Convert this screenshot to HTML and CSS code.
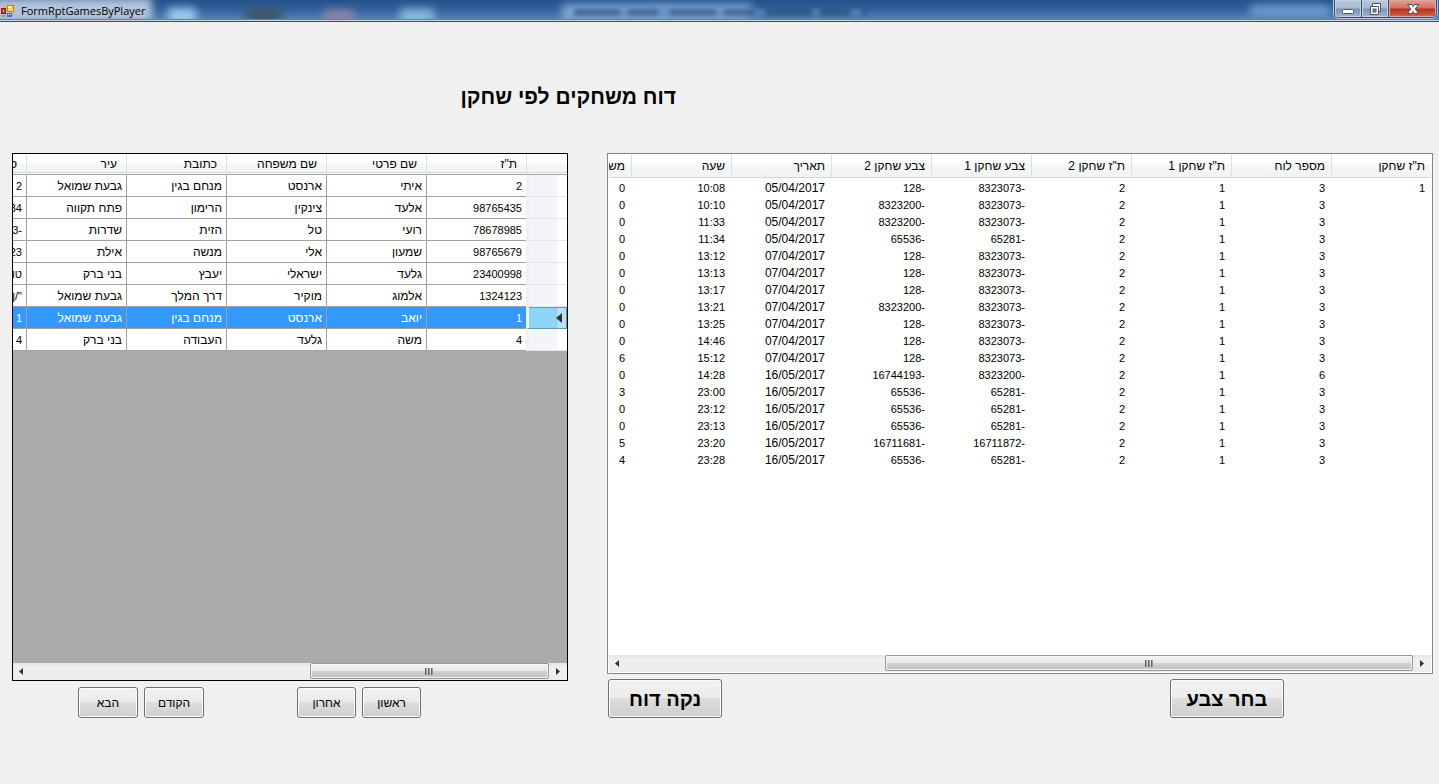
FILE: index.html
```html
<!DOCTYPE html>
<html lang="he">
<head>
<meta charset="utf-8">
<title>FormRptGamesByPlayer</title>
<link rel="stylesheet" href="styles.css">
</head>
<body>
<header class="titlebar">
  <svg class="app-icon" width="14" height="14" viewBox="0 0 14 14" aria-hidden="true">
    <rect width="14" height="14" fill="#b9bcc4"/>
    <rect x="0.5" y="4.500" width="4" height="5" fill="#c8352b" stroke="#8c1e17"/>
    <rect x="2" y="6" width="1" height="2" fill="#f3a49c"/>
    <rect x="6.500" y="1.500" width="6" height="6" fill="#ffd64a" stroke="#b8860b"/>
    <rect x="7" y="2" width="3" height="2" fill="#fff0a8"/>
    <rect x="6" y="9" width="5" height="4" fill="#3f6fd0"/>
    <rect x="7" y="10" width="3" height="1" fill="#a8c4f5"/>
    <rect x="1" y="11" width="3" height="2" fill="#8d9099"/>
  </svg>
  <span class="titlebar-text">FormRptGamesByPlayer</span>
  <div class="glass" aria-hidden="true">
    <i class="blot blot-a"></i><i class="blot blot-b"></i><i class="blot blot-c"></i><i class="blot blot-d"></i>
    <i class="blot blot-e"></i><i class="blot blot-f"></i><i class="blot blot-g"></i><i class="blot blot-h"></i>
  </div>
  <div class="window-buttons">
    <button class="win-btn" aria-label="Minimize"><svg width="14" height="12" viewBox="0 0 14 12"><rect x="1.500" y="6.500" width="11" height="4" rx="1" fill="#fff" stroke="#4b5468"/></svg></button>
    <button class="win-btn" aria-label="Restore"><svg width="14" height="12" viewBox="0 0 14 12"><path d="M4.500.5h8v8h-2v3h-8v-8h2z" fill="#fff" stroke="#4b5468"/><path d="M4.500 3.500h6v5" fill="none" stroke="#4b5468"/><rect x="5" y="6" width="3" height="3" fill="#7d90ab" stroke="#4b5468"/></svg></button>
    <button class="win-btn win-close" aria-label="Close"><svg width="14" height="12" viewBox="0 0 14 12"><path d="M1.500 1.500h4l1.500 2 1.500-2h4L9.300 6l3.200 4.500h-4L7 8.500l-1.500 2h-4L4.700 6z" fill="#fff" stroke="#4b4a5c"/></svg></button>
  </div>
</header>
<main class="form">
  <h1 class="heading" dir="rtl">דוח משחקים לפי שחקן</h1>
  <div class="panels">
    <section class="panel">
      <div class="grid">
        <div class="grid-body" dir="rtl">
          <table class="players">
            <colgroup><col class="col-mark"><col><col><col><col><col><col></colgroup>
            <thead><tr><th></th><th>ת"ז</th><th>שם פרטי</th><th>שם משפחה</th><th>כתובת</th><th>עיר</th><th>ס</th></tr></thead>
            <tbody>
              <tr><th></th><td class="num">2</td><td>איתי</td><td>ארנסט</td><td>מנחם בגין</td><td>גבעת שמואל</td><td class="num">2</td></tr>
              <tr><th></th><td class="num">98765435</td><td>אלעד</td><td>צינקין</td><td>הרימון</td><td>פתח תקווה</td><td class="num">34</td></tr>
              <tr><th></th><td class="num">78678985</td><td>רועי</td><td>טל</td><td>הזית</td><td>שדרות</td><td class="num">-3</td></tr>
              <tr><th></th><td class="num">98765679</td><td>שמעון</td><td>אלי</td><td>מנשה</td><td>אילת</td><td class="num">23</td></tr>
              <tr><th></th><td class="num">23400998</td><td>גלעד</td><td>ישראלי</td><td>יעבץ</td><td>בני ברק</td><td class="num">טו</td></tr>
              <tr><th></th><td class="num">1324123</td><td>אלמוג</td><td>מוקיר</td><td>דרך המלך</td><td>גבעת שמואל</td><td class="num">"/ן</td></tr>
              <tr class="selected"><th><svg width="6" height="10" viewBox="0 0 6 10" aria-hidden="true"><path d="M6 0v10L0 5z" fill="#333"/></svg></th><td class="num">1</td><td>יואב</td><td>ארנסט</td><td>מנחם בגין</td><td>גבעת שמואל</td><td class="num">1</td></tr>
              <tr><th></th><td class="num">4</td><td>משה</td><td>גלעד</td><td>העבודה</td><td>בני ברק</td><td class="num">4</td></tr>
            </tbody>
          </table>
        </div>
        <div class="scrollbar">
          <button class="arrow" aria-label="גלול שמאלה"><svg width="4" height="7" viewBox="0 0 4 7"><path d="M4 0v7L0 3.500z" fill="#333"/></svg></button>
          <div class="track"><div class="thumb thumb-grid"><i class="grip"></i></div></div>
          <button class="arrow arrow-end" aria-label="גלול ימינה"><svg width="4" height="7" viewBox="0 0 4 7"><path d="M0 0v7l4-3.500z" fill="#333"/></svg></button>
        </div>
      </div>
      <div class="nav-buttons">
        <button class="btn" dir="rtl">הבא</button>
        <button class="btn" dir="rtl">הקודם</button>
        <button class="btn btn-narrow btn-last" dir="rtl">אחרון</button>
        <button class="btn btn-narrow" dir="rtl">ראשון</button>
      </div>
    </section>
    <section class="panel">
      <div class="list">
        <div class="list-body" dir="rtl">
          <table class="games">
            <thead><tr><th>ת"ז שחקן</th><th>מספר לוח</th><th>ת"ז שחקן 1</th><th>ת"ז שחקן 2</th><th>צבע שחקן 1</th><th>צבע שחקן 2</th><th>תאריך</th><th>שעה</th><th>מש</th></tr></thead>
            <tbody>
              <tr><td>1</td><td>3</td><td>1</td><td>2</td><td>-8323073</td><td>-128</td><td>05/04/2017</td><td>10:08</td><td>0</td></tr>
              <tr><td></td><td>3</td><td>1</td><td>2</td><td>-8323073</td><td>-8323200</td><td>05/04/2017</td><td>10:10</td><td>0</td></tr>
              <tr><td></td><td>3</td><td>1</td><td>2</td><td>-8323073</td><td>-8323200</td><td>05/04/2017</td><td>11:33</td><td>0</td></tr>
              <tr><td></td><td>3</td><td>1</td><td>2</td><td>-65281</td><td>-65536</td><td>05/04/2017</td><td>11:34</td><td>0</td></tr>
              <tr><td></td><td>3</td><td>1</td><td>2</td><td>-8323073</td><td>-128</td><td>07/04/2017</td><td>13:12</td><td>0</td></tr>
              <tr><td></td><td>3</td><td>1</td><td>2</td><td>-8323073</td><td>-128</td><td>07/04/2017</td><td>13:13</td><td>0</td></tr>
              <tr><td></td><td>3</td><td>1</td><td>2</td><td>-8323073</td><td>-128</td><td>07/04/2017</td><td>13:17</td><td>0</td></tr>
              <tr><td></td><td>3</td><td>1</td><td>2</td><td>-8323073</td><td>-8323200</td><td>07/04/2017</td><td>13:21</td><td>0</td></tr>
              <tr><td></td><td>3</td><td>1</td><td>2</td><td>-8323073</td><td>-128</td><td>07/04/2017</td><td>13:25</td><td>0</td></tr>
              <tr><td></td><td>3</td><td>1</td><td>2</td><td>-8323073</td><td>-128</td><td>07/04/2017</td><td>14:46</td><td>0</td></tr>
              <tr><td></td><td>3</td><td>1</td><td>2</td><td>-8323073</td><td>-128</td><td>07/04/2017</td><td>15:12</td><td>6</td></tr>
              <tr><td></td><td>6</td><td>1</td><td>2</td><td>-8323200</td><td>-16744193</td><td>16/05/2017</td><td>14:28</td><td>0</td></tr>
              <tr><td></td><td>3</td><td>1</td><td>2</td><td>-65281</td><td>-65536</td><td>16/05/2017</td><td>23:00</td><td>3</td></tr>
              <tr><td></td><td>3</td><td>1</td><td>2</td><td>-65281</td><td>-65536</td><td>16/05/2017</td><td>23:12</td><td>0</td></tr>
              <tr><td></td><td>3</td><td>1</td><td>2</td><td>-65281</td><td>-65536</td><td>16/05/2017</td><td>23:13</td><td>0</td></tr>
              <tr><td></td><td>3</td><td>1</td><td>2</td><td>-16711872</td><td>-16711681</td><td>16/05/2017</td><td>23:20</td><td>5</td></tr>
              <tr><td></td><td>3</td><td>1</td><td>2</td><td>-65281</td><td>-65536</td><td>16/05/2017</td><td>23:28</td><td>4</td></tr>
            </tbody>
          </table>
        </div>
        <div class="scrollbar">
          <button class="arrow" aria-label="גלול שמאלה"><svg width="4" height="7" viewBox="0 0 4 7"><path d="M4 0v7L0 3.500z" fill="#333"/></svg></button>
          <div class="track"><div class="thumb thumb-list"><i class="grip"></i></div></div>
          <button class="arrow arrow-end" aria-label="גלול ימינה"><svg width="4" height="7" viewBox="0 0 4 7"><path d="M0 0v7l4-3.500z" fill="#333"/></svg></button>
        </div>
      </div>
      <div class="report-buttons">
        <button class="btn btn-big" dir="rtl">נקה דוח</button>
        <button class="btn btn-big" dir="rtl">בחר צבע</button>
      </div>
    </section>
  </div>
</main>
</body>
</html>
```
FILE: styles.css
```css
* { box-sizing: border-box; }

body {
  margin: 0;
  min-height: 100vh;
  display: flex;
  flex-direction: column;
  background: #f0f0f0;
  color: #000;
  font: 12px/16px "Liberation Sans", Arial, sans-serif;
}

button { margin: 0; padding: 0; border: 0; background: none; font: inherit; color: inherit; }
svg { display: block; }

/* Title bar */
.titlebar {
  position: relative;
  display: flex;
  align-items: center;
  height: 22px;
  padding-left: 1px;
  gap: 6px;
  background: linear-gradient(#25528b, #2f5f9a 40%, #5a86bb);
  border-bottom: 1px solid #3c4a62;
  box-shadow: inset 0 -1px #c5d6ea;
}
.app-icon { position: relative; z-index: 1; }
.titlebar-text {
  position: relative;
  z-index: 1;
  font-family: "Open Sans", "Noto Sans", sans-serif;
  font-size: 11px;
}
.glass { position: absolute; inset: 0 0 2px; overflow: hidden; }
.blot { position: absolute; filter: blur(4px); }
.blot-a { left: -10px; top: -2px; width: 162px; height: 24px; background: #b4c4dc; }
.blot-b { left: 168px; top: 8px; width: 28px; height: 16px; background: #9cc8ee; }
.blot-c { left: 246px; top: 8px; width: 36px; height: 14px; background: #3c5468; }
.blot-d { left: 324px; top: 10px; width: 30px; height: 14px; background: #8c84a8; }
.blot-e { left: 400px; top: 9px; width: 34px; height: 16px; background: #84b8dc; }
.blot-f { left: 562px; top: 4px; width: 190px; height: 18px; background: #7ea4d2; }
.blot-g {
  left: 574px;
  top: 9px;
  width: 292px;
  height: 7px;
  background: repeating-linear-gradient(to right, #2c5080 0 46px, #5a86bb 46px 54px, #2c5080 54px 84px, #5a86bb 84px 96px);
  filter: blur(2px);
  opacity: 0.7;
}
.blot-h { left: 1250px; top: 5px; width: 80px; height: 12px; background: #6f9bcc; }

.window-buttons {
  position: relative;
  align-self: flex-start;
  display: flex;
  margin-left: auto;
  margin-right: 2px;
  border: 1px solid #3c4a62;
  border-top: 0;
  border-radius: 0 0 5px 5px;
  overflow: hidden;
  box-shadow: 0 0 0 1px #b4c8e0;
}
.win-btn {
  display: grid;
  place-items: center;
  width: 27px;
  height: 17px;
  border-right: 1px solid #3c4a62;
  background: linear-gradient(#b9c7da, #a9bad0 48%, #7a92b2 52%, #9fb5d0);
  box-shadow: inset 0 0 0 1px #c4d2e4;
}
.win-close {
  width: 47px;
  border-right: 0;
  background: linear-gradient(#dea093, #cf7261 48%, #b8301c 52%, #d4674c);
  box-shadow: inset 0 0 0 1px #e0a69a;
}

/* Form */
.form {
  flex: 1;
  display: flex;
  flex-direction: column;
  padding: 60px 6px 66px 12px;
}
.heading {
  width: 217px;
  margin: 0 0 41px 447px;
  font-size: 21px;
  line-height: 30px;
  white-space: nowrap;
}
.panels {
  flex: 1;
  display: grid;
  grid-template-columns: minmax(0, 556fr) minmax(0, 826fr);
  gap: 39px;
}
.panel { display: flex; flex-direction: column; }

table { border-collapse: separate; border-spacing: 0; table-layout: fixed; }
th, td {
  padding: 0;
  overflow: hidden;
  font-weight: normal;
  text-align: right;
  white-space: nowrap;
}

/* Players grid */
.grid {
  flex: 1;
  display: flex;
  flex-direction: column;
  border: 1px solid #000;
  background: #ababab;
}
.grid-body { flex: 1; overflow: hidden; }
.players { width: 641px; }
.col-mark { width: 41px; }
.players thead th {
  height: 21px;
  padding-right: 9px;
  border-left: 1px solid #dedfe1;
  border-bottom: 1px solid #a0a0a0;
  background: linear-gradient(#fff 45%, #f4f5f7 50%, #f2f3f5);
  box-shadow: inset 0 -1px #fff, inset 0 -2px #d5d5d5;
}
.players td {
  height: 22px;
  padding-right: 4px;
  border-left: 1px solid #a0a0a0;
  border-bottom: 1px solid #a0a0a0;
  background: #fff;
}
.players .num { font-size: 11px; }
.players tbody th {
  border-left: 3px solid #f0f0f0;
  border-bottom: 1px solid #e4e5e7;
  background: linear-gradient(to left, #fff 9px, #f4f5f8 10px);
}
.players .selected td { background: #3399ff; color: #fff; }
.players .selected th {
  padding-right: 5px;
  border-bottom-color: #5c9cb8;
  background: linear-gradient(to left, #b8e2f5 9px, #8ed4f6 10px);
  box-shadow: inset 0 1px #5c9cb8, inset -1px 0 #5c9cb8;
}

/* Games list */
.list {
  flex: 1;
  display: flex;
  flex-direction: column;
  padding: 0 1px 1px;
  border: 1px solid #828790;
  background: #fff;
}
.list-body { flex: 1; overflow: hidden; }
.games { width: 900px; }
.games thead th {
  height: 24px;
  padding-right: 6px;
  border-left: 1px solid #dedfe1;
  border-bottom: 1px solid #d5d5d5;
  background: linear-gradient(#fff 40%, #f7f8fa 44%, #f1f2f4);
}
.games td { height: 17px; padding-right: 6px; font-size: 11px; }
.games td:nth-child(7) { font-size: 12px; }
.games tbody::before { content: ""; display: block; height: 1px; }

/* Scroll bars */
.scrollbar {
  display: flex;
  height: 17px;
  background: linear-gradient(#e6e6e6, #f0f0f0 30%, #ececec);
}
.arrow { display: grid; place-items: center; width: 16px; height: 17px; }
.arrow-end { width: 18px; }
.track { flex: 1; display: flex; justify-content: flex-end; }
.thumb {
  display: grid;
  place-items: center;
  height: 16px;
  border: 1px solid #979797;
  border-radius: 2px;
  background: linear-gradient(#f5f5f5, #e6e6e7 48%, #d0d1d3 52%, #c0c1c4);
  box-shadow: inset 0 0 0 1px #f5f5f5;
}
.thumb-grid { width: 46%; }
.thumb-list { width: 67%; }
.grip {
  width: 8px;
  height: 7px;
  background: repeating-linear-gradient(to right, #666 0 1px, #999 1px 2px, transparent 2px 3px);
}

/* Buttons */
.btn {
  width: 60px;
  height: 31px;
  border: 1px solid #707070;
  border-radius: 3px;
  background: linear-gradient(#f2f2f2, #ebebeb 48%, #dddddd 50%, #cfcfcf);
  box-shadow: inset 0 0 0 1px #fcfcfc;
}
.nav-buttons { display: flex; gap: 6px; padding: 6px 0 0 66px; }
.btn-narrow { width: 59px; }
.btn-last { margin-left: 87px; }
.report-buttons {
  display: flex;
  justify-content: space-between;
  padding: 5px 149px 0 1px;
}
.btn-big { width: 114px; height: 39px; font-size: 20px; font-weight: bold; }
```
